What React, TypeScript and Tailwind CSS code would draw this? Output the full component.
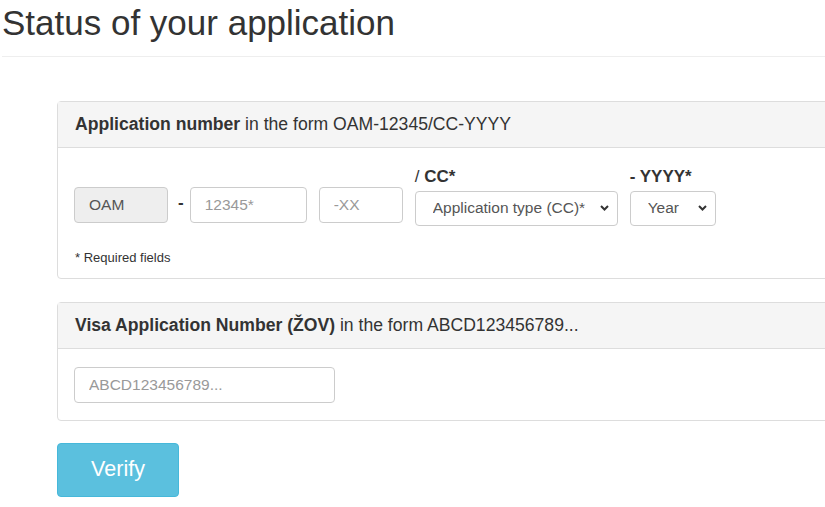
import React from "react";

const inputCls =
  "h-[36px] rounded-[4px] border border-[#ccc] px-[14px] text-[15.5px] text-[#555] placeholder:text-[#999] outline-none";

const Chevron: React.FC = () => (
  <svg
    className="pointer-events-none absolute right-[9px] top-1/2 -translate-y-1/2"
    width="9"
    height="6"
    viewBox="0 0 9 6"
    fill="none"
  >
    <polyline points="1,1 4.5,4.5 8,1" stroke="#333" strokeWidth="2" />
  </svg>
);

const Select: React.FC<{ label: React.ReactNode; text: string; width: string }> = ({ label, text, width }) => (
  <div className="flex flex-col">
    <label className="text-[17px] leading-[20px] text-[#333]">{label}</label>
    <div className={`relative mt-[4px] ${width}`}>
      <select className="h-[35px] w-full appearance-none rounded-[4px] border border-[#ccc] bg-white pl-[17px] pr-[24px] text-[15.5px] text-[#555] outline-none">
        <option>{text}</option>
      </select>
      <Chevron />
    </div>
  </div>
);

const App: React.FC = () => {
  return (
    <div className="min-h-screen w-full overflow-hidden bg-white pl-[2px] font-['Liberation_Sans',Arial,sans-serif] text-[#333]">
      {/* Page title */}
      <h1 className="border-b border-[#eee] pt-[4px] pb-[13px] text-[35px] font-normal leading-[1.1]">
        Status of your application
      </h1>

      <div className="ml-[55px] mt-[44px] w-[800px]">
        {/* Application number panel */}
        <div className="rounded-[4px] border border-[#ddd] bg-white">
          <div className="flex h-[46px] items-center border-b border-[#ddd] bg-[#f5f5f5] px-[17px] text-[17.6px]">
            <span>
              <b>Application number</b> in the form OAM-12345/CC-YYYY
            </span>
          </div>
          <div className="pl-[16px] pr-[17px] pt-[19px] pb-[11px]">
            <div className="flex items-start">
              <input
                readOnly
                value="OAM"
                className={`${inputCls} mt-[20px] w-[94px] bg-[#eee]`}
              />
              <span className="mt-[26px] ml-[10px] mr-[6px] text-[17px] font-bold leading-[20px]">-</span>
              <input placeholder="12345*" className={`${inputCls} mt-[20px] w-[117px] bg-white`} />
              <input placeholder="-XX" className={`${inputCls} mt-[20px] ml-[12px] w-[84px] bg-white`} />
              <div className="ml-[12px]">
                <Select
                  label={
                    <>
                      / <b>CC*</b>
                    </>
                  }
                  text="Application type (CC)*"
                  width="w-[203px]"
                />
              </div>
              <div className="ml-[12px]">
                <Select label={<b>- YYYY*</b>} text="Year" width="w-[86px]" />
              </div>
            </div>
            <p className="mt-[23px] pl-[1px] text-[13px] leading-[18px]">* Required fields</p>
          </div>
        </div>

        {/* Visa application number panel */}
        <div className="mt-[23px] rounded-[4px] border border-[#ddd] bg-white">
          <div className="flex h-[46px] items-center border-b border-[#ddd] bg-[#f5f5f5] px-[17px] text-[17.6px]">
            <span>
              <b>Visa Application Number (ŽOV)</b> in the form ABCD123456789...
            </span>
          </div>
          <div className="pl-[16px] pr-[17px] pt-[18px] pb-[17px]">
            <input placeholder="ABCD123456789..." className={`${inputCls} w-[261px] bg-white`} />
          </div>
        </div>

        <button className="mt-[22px] h-[54px] w-[122px] rounded-[4px] border border-[#46b8da] bg-[#5bc0de] text-[21.5px] text-white">
          Verify
        </button>
      </div>
    </div>
  );
};

export default App;
